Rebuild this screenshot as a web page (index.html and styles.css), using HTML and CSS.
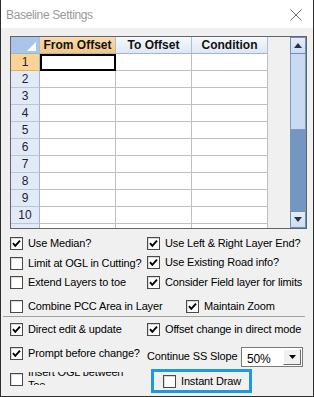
FILE: index.html
```html
<!DOCTYPE html>
<html lang="en">
<head>
    <meta charset="UTF-8">
    <title>Baseline Settings</title>
    <link rel="stylesheet" href="styles.css">
</head>
<body>
    <div class="window">
        <div class="titlebar">
            <span class="title">Baseline Settings</span>
            <svg class="close" width="12" height="12" viewBox="0 0 12 12">
                <path d="M0.5 0.5 L11.5 11.5 M11.5 0.5 L0.5 11.5" stroke="#707070" stroke-width="1" fill="none"/>
            </svg>
        </div>

        <div class="content">
            <div class="sheet">
                <div class="table">
                    <div class="row head">
                        <div class="corner">
                            <svg width="9" height="9" viewBox="0 0 9 9"><path d="M9 0 L9 9 L0 9 Z" fill="#fff"/></svg>
                        </div>
                        <div class="col-head active">From Offset</div>
                        <div class="col-head">To Offset</div>
                        <div class="col-head">Condition</div>
                    </div>
                    <div class="row"><div class="row-head active">1</div><div class="cell selected"></div><div class="cell"></div><div class="cell"></div></div>
                    <div class="row"><div class="row-head">2</div><div class="cell"></div><div class="cell"></div><div class="cell"></div></div>
                    <div class="row"><div class="row-head">3</div><div class="cell"></div><div class="cell"></div><div class="cell"></div></div>
                    <div class="row"><div class="row-head">4</div><div class="cell"></div><div class="cell"></div><div class="cell"></div></div>
                    <div class="row"><div class="row-head">5</div><div class="cell"></div><div class="cell"></div><div class="cell"></div></div>
                    <div class="row"><div class="row-head">6</div><div class="cell"></div><div class="cell"></div><div class="cell"></div></div>
                    <div class="row"><div class="row-head">7</div><div class="cell"></div><div class="cell"></div><div class="cell"></div></div>
                    <div class="row"><div class="row-head">8</div><div class="cell"></div><div class="cell"></div><div class="cell"></div></div>
                    <div class="row"><div class="row-head">9</div><div class="cell"></div><div class="cell"></div><div class="cell"></div></div>
                    <div class="row"><div class="row-head">10</div><div class="cell"></div><div class="cell"></div><div class="cell"></div></div>
                    <div class="row"><div class="row-head"></div><div class="cell"></div><div class="cell"></div><div class="cell"></div></div>
                </div>
                <div class="blank"></div>
                <div class="vscroll">
                    <div class="sb-btn">
                        <svg width="8" height="5" viewBox="0 0 8 5"><path d="M0 5 L4 0 L8 5 Z" fill="#27324a"/></svg>
                    </div>
                    <div class="sb-thumb"></div>
                    <div class="sb-track"></div>
                    <div class="sb-btn">
                        <svg width="8" height="5" viewBox="0 0 8 5"><path d="M0 0 L8 0 L4 5 Z" fill="#27324a"/></svg>
                    </div>
                </div>
            </div>

            <div class="options upper">
                <label class="opt"><span class="box checked"><svg viewBox="0 0 11 11"><path d="M2 5.2 L4.3 7.8 L9 2.6"/></svg></span>Use Median?</label>
                <label class="opt"><span class="box checked"><svg viewBox="0 0 11 11"><path d="M2 5.2 L4.3 7.8 L9 2.6"/></svg></span>Use Left &amp; Right Layer End?</label>
                <label class="opt"><span class="box"></span>Limit at OGL in Cutting?</label>
                <label class="opt up1"><span class="box checked"><svg viewBox="0 0 11 11"><path d="M2 5.2 L4.3 7.8 L9 2.6"/></svg></span>Use Existing Road info?</label>
                <label class="opt"><span class="box"></span>Extend Layers to toe</label>
                <label class="opt"><span class="box checked"><svg viewBox="0 0 11 11"><path d="M2 5.2 L4.3 7.8 L9 2.6"/></svg></span>Consider Field layer for limits</label>
                <label class="opt"><span class="box"></span>Combine PCC Area in Layer</label>
                <label class="opt zoom"><span class="box checked"><svg viewBox="0 0 11 11"><path d="M2 5.2 L4.3 7.8 L9 2.6"/></svg></span>Maintain Zoom</label>
            </div>

            <div class="sep"></div>

            <div class="options lower">
                <label class="opt"><span class="box checked"><svg viewBox="0 0 11 11"><path d="M2 5.2 L4.3 7.8 L9 2.6"/></svg></span>Direct edit &amp; update</label>
                <label class="opt"><span class="box checked"><svg viewBox="0 0 11 11"><path d="M2 5.2 L4.3 7.8 L9 2.6"/></svg></span>Offset change in direct mode</label>
                <label class="opt"><span class="box checked"><svg viewBox="0 0 11 11"><path d="M2 5.2 L4.3 7.8 L9 2.6"/></svg></span>Prompt before change?</label>
                <div class="slope">
                    <span class="slope-label">Continue SS Slope</span>
                    <div class="combo">
                        <span class="combo-value">50%</span>
                        <span class="combo-btn">
                            <svg width="7" height="4" viewBox="0 0 7 4"><path d="M0 0 L7 0 L3.5 4 Z" fill="#000"/></svg>
                        </span>
                    </div>
                </div>
                <label class="opt wrap"><span class="box"></span><span class="clip">Insert OGL between Toe</span></label>
                <div class="instant">
                    <label class="opt"><span class="box"></span>Instant Draw</label>
                </div>
            </div>
        </div>
    </div>
</body>
</html>
```

FILE: styles.css
```css
* {
    box-sizing: border-box;
}
body {
    margin: 0;
    font-family: "Liberation Sans", Arial, sans-serif;
    font-size: 11px;
    color: #000;
    background: #f0f0f0;
}
.window {
    width: 314px;
    height: 397px;
    border-left: 1px solid #2e2e2e;
    border-right: 1px solid #2e2e2e;
    border-bottom: 1px solid #2e2e2e;
    background: #f0f0f0;
    overflow: hidden;
}
.titlebar {
    height: 28px;
    background: #fff;
    display: flex;
    align-items: center;
    justify-content: space-between;
    padding: 0 11px 0 5px;
}
.title {
    font-size: 12px;
    letter-spacing: -0.35px;
    color: #9a9a9a;
    padding-top: 1px;
}
.close {
    display: block;
    margin-top: 2px;
}
.content {
    padding-top: 8px;
}

/* grid */
.sheet {
    display: flex;
    width: 297px;
    height: 193px;
    margin-left: 9px;
    border: 1px solid #646464;
    background: #f0f0f0;
}
.table {
    width: 257px;
    overflow: hidden;
    background: #fff;
}
.row {
    display: grid;
    grid-template-columns: 29px 76px 76px 76px;
    height: 17px;
}
.row > div {
    border-right: 1px solid #c0c0c0;
    border-bottom: 1px solid #c0c0c0;
}
.row.head > div {
    border-right-color: #a9bfd8;
    border-bottom-color: #9eb6ce;
}
.corner {
    background: #a9c5ea;
    display: flex;
    align-items: flex-end;
    justify-content: flex-end;
    padding: 0 3px 2px 0;
}
.corner svg {
    display: block;
}
.col-head {
    background: linear-gradient(#f6f9fd, #dde7f4);
    font-weight: bold;
    font-size: 12px;
    line-height: 16px;
    text-align: center;
    color: #111;
}
.col-head.active {
    background: linear-gradient(#fadcaf, #f6c57e);
    border-right-color: #e0b070;
    border-bottom-color: #e0a860;
}
.row .row-head {
    background: #e2eaf6;
    border-right-color: #9eb6ce;
    border-bottom-color: #b4c6dc;
    font-size: 12px;
    line-height: 16px;
    text-align: center;
    color: #1c1c3c;
}
.row .row-head.active {
    background: #fbd394;
    border-bottom-color: #e0b070;
}
.cell.selected {
    outline: 2px solid #000;
    outline-offset: -2px;
}
.blank {
    width: 22px;
    background: #f0f0f0;
}

/* scrollbar */
.vscroll {
    width: 16px;
    display: flex;
    flex-direction: column;
}
.sb-btn {
    height: 17px;
    background: linear-gradient(#e4edf9, #cddcf1);
    border: 1px solid #6f8fba;
    display: flex;
    align-items: center;
    justify-content: center;
}
.sb-btn svg {
    display: block;
}
.sb-thumb {
    height: 76px;
    background: #c9daf2;
    border: 1px solid #7c9cc6;
    border-top: none;
}
.sb-track {
    flex: 1;
    background: #7497c2;
}

/* options */
.options {
    display: grid;
    grid-template-columns: 137px 1fr;
    padding-left: 9px;
    align-items: start;
    letter-spacing: -0.15px;
}
.options.upper {
    margin-top: 8px;
    grid-template-rows: 20px 19px 24px 13px;
}
.options.lower {
    margin-top: 6px;
    grid-template-rows: 24px 22px 24px;
}
.opt {
    display: flex;
    align-items: center;
    gap: 4px;
    height: 13px;
    line-height: 13px;
    white-space: nowrap;
}
.opt.up1 {
    margin-top: -1px;
}
.opt.zoom {
    margin-left: 39px;
}
.box {
    width: 13px;
    height: 13px;
    flex: none;
    border: 1px solid #4a4a4a;
    background: #fff;
    box-shadow: inset 1px 1px 0 #d8d8d8;
    margin-right: 1px;
}
.box svg {
    display: block;
    width: 11px;
    height: 11px;
    fill: none;
    stroke: #000;
    stroke-width: 1.9;
}
.sep {
    height: 1px;
    margin: 3px 8px 0 2px;
    background: #a0a0a0;
}
.slope {
    display: flex;
    align-items: flex-start;
}
.slope-label {
    width: 94px;
    padding-top: 3px;
    line-height: 13px;
    white-space: nowrap;
}
.combo {
    width: 62px;
    height: 20px;
    border: 1px solid #7a7a7a;
    background: #fff;
    display: flex;
    align-items: stretch;
    padding: 1px;
}
.combo-value {
    flex: 1;
    font-size: 12px;
    line-height: 18px;
    padding-left: 4px;
    padding-top: 1px;
}
.combo-btn {
    width: 18px;
    height: 16px;
    background: #f0f0f0;
    border: 1px solid;
    border-color: #fff #6a6a6a #6a6a6a #fff;
    display: flex;
    align-items: center;
    justify-content: center;
}
.opt.wrap {
    height: 24px;
    align-items: flex-start;
    padding-top: 4px;
}
.clip {
    width: 100px;
    height: 13px;
    margin-top: -1px;
    line-height: 13px;
    white-space: normal;
    overflow: hidden;
    display: flex;
    align-items: center;
}
.instant {
    margin-left: 4px;
    width: 101px;
    height: 24px;
    border: 3px solid #1a9be0;
    display: flex;
    align-items: center;
    padding-left: 9px;
}
```
